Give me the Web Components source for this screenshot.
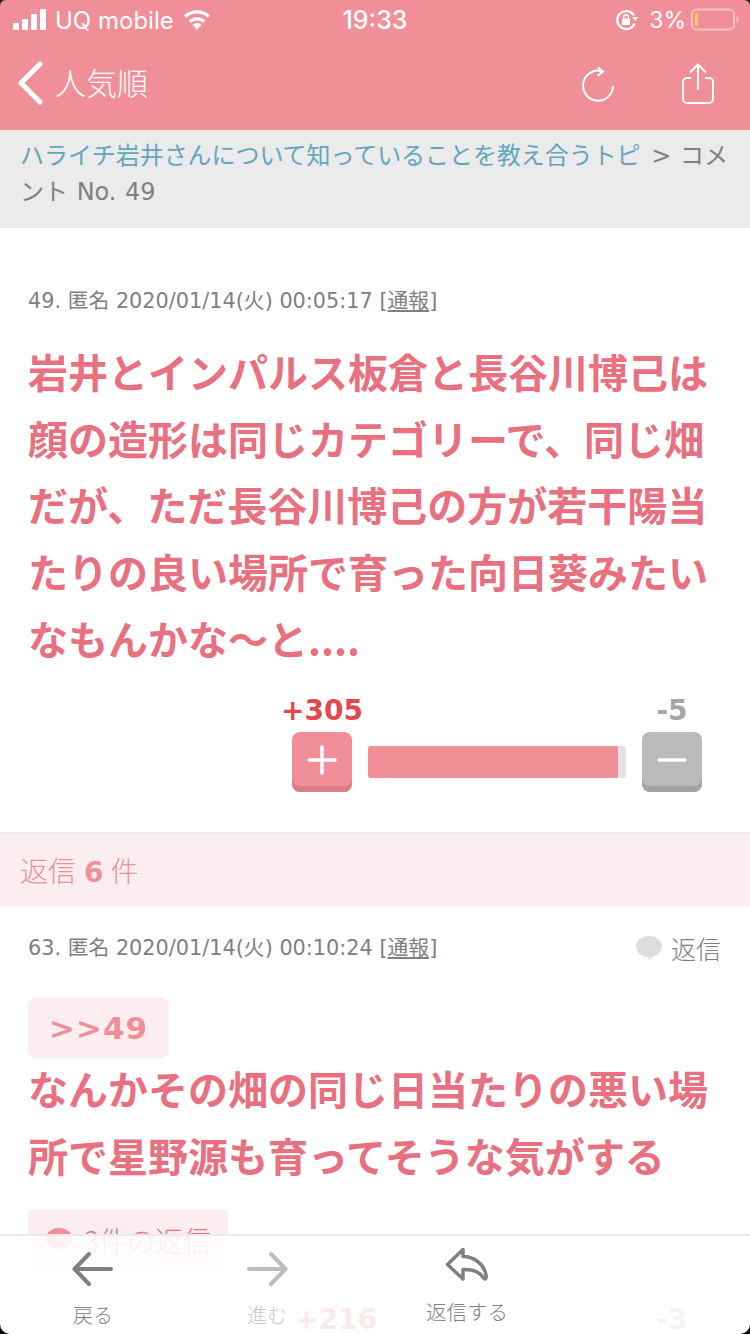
<!DOCTYPE html>
<html lang="ja"><head><meta charset="utf-8"><title>コメント</title>
<style>
html,body{margin:0;padding:0;background:#fff}
body{width:750px;height:1334px;overflow:hidden;position:relative;font-family:"DejaVu Sans","Noto Sans CJK JP",sans-serif}
</style></head><body>
<app-screen>
  <app-header></app-header>
  <bread-crumb></bread-crumb>
  <comment-main></comment-main>
  <reply-head></reply-head>
  <comment-reply></comment-reply>
</app-screen>
<bottom-bar></bottom-bar>
<script>
const FONT='"DejaVu Sans","Noto Sans CJK JP",sans-serif';
function def(name,css,html){
  customElements.define(name,class extends HTMLElement{
    constructor(){super();const s=this.attachShadow({mode:'open'});s.innerHTML='<style>'+css+'</style>'+html;}
  });
}
def('app-screen',':host{display:block;width:750px;height:1334px;overflow:hidden}','<slot></slot>');
def('app-header',`
:host{display:block;background:#f18f99;color:#fff;height:130px;position:relative}
.status{height:40px;position:relative;display:flex;align-items:center;padding:0 11px 0 13px;box-sizing:border-box;color:#fff;font-family:Inter,"Liberation Sans",sans-serif;font-size:24px}
.left{display:flex;align-items:center;gap:9px}
.time{position:absolute;left:0;right:0;text-align:center;font-size:25px;font-weight:500}
.right{margin-left:auto;display:flex;align-items:center;gap:10px}
.right span{font-size:23px}
.nav{height:90px;display:flex;align-items:center;padding:0 35px 0 17px}
.nav .back{display:flex;align-items:center;gap:12px;font-size:31px;font-family:"Noto Sans CJK JP",sans-serif;font-weight:300;margin-top:-4px}
.nav .back span{position:relative;top:-2px}
.nav .tools{margin-left:auto;display:flex;align-items:flex-start;gap:66px;margin-top:-3px}
.tools svg:first-child{margin-top:4px}
svg{display:block}
.cn{position:absolute;top:0;width:6px;height:6px}
`,`
<svg class="cn" style="left:0" viewBox="0 0 6 6"><path d="M0 0h6a6 6 0 0 0-6 6z" fill="#2a2224"/></svg>
<svg class="cn" style="right:0" viewBox="0 0 6 6"><path d="M6 0H0a6 6 0 0 1 6 6z" fill="#2a2224"/></svg>
<div class="status">
 <div class="left">
  <svg width="33" height="22" viewBox="0 0 33 22"><rect x="0" y="14" width="6" height="7" rx="1.2" fill="#fff"/><rect x="9" y="10" width="6" height="11" rx="1.2" fill="#fff"/><rect x="18" y="5" width="6" height="16" rx="1.2" fill="#fff"/><rect x="27" y="0" width="6" height="21" rx="1.2" fill="#fff"/></svg>
  <span>UQ mobile</span>
  <svg width="30" height="22" viewBox="0 0 30 22" style="margin-left:-1px"><path d="M15 21l-4.400-5.200a6.600 6.600 0 0 1 8.800 0z" fill="#fff"/><path d="M7.800 12.600a10.800 10.800 0 0 1 14.400 0M3.200 7.400a17.600 17.600 0 0 1 23.600 0" fill="none" stroke="#fff" stroke-width="3.400"/></svg>
 </div>
 <div class="time">19:33</div>
 <div class="right">
  <svg width="24" height="22" viewBox="0 0 24 22"><path d="M19.600 14.500A9 9 0 1 1 19 6.500" fill="none" stroke="#fff" stroke-width="2.200"/><path d="M17 8h6.500l-3.200 4z" fill="#fff"/><rect x="7" y="9.500" width="8" height="6.500" rx="1" fill="#fff"/><path d="M8.700 9.500V8a2.300 2.300 0 0 1 4.600 0v1.500" fill="none" stroke="#fff" stroke-width="1.400"/></svg>
  <span>3%</span>
  <svg width="48" height="24" viewBox="0 0 48 24" style="margin-left:-5px"><rect x="1" y="1.500" width="42" height="20" rx="5" fill="none" stroke="#fff" stroke-opacity=".45" stroke-width="2"/><rect x="4" y="5" width="3" height="13" rx="1" fill="#fbc85c"/><path d="M45.500 8v7c1.500-.5 2.200-2 2.200-3.500s-.7-3-2.200-3.500z" fill="#fff" fill-opacity=".45"/></svg>
 </div>
</div>
<div class="nav">
 <div class="back">
  <svg width="26" height="44" viewBox="0 0 26 44"><path d="M23 3L4 22l19 19" fill="none" stroke="#fff" stroke-width="5" stroke-linecap="round" stroke-linejoin="round"/></svg>
  <span>人気順</span>
 </div>
 <div class="tools">
  <svg width="34" height="36" viewBox="0 0 34 36"><path d="M21 4.200A15 15 0 1 0 32 19" fill="none" stroke="#fff" stroke-width="2"/><path d="M16.500 0l5.500 4.500-5.500 4.500" fill="none" stroke="#fff" stroke-width="2"/></svg>
  <svg width="34" height="42" viewBox="0 0 34 42"><path d="M10 15H6a4 4 0 0 0-4 4v17a4 4 0 0 0 4 4h22a4 4 0 0 0 4-4V19a4 4 0 0 0-4-4h-4" fill="none" stroke="#fff" stroke-width="2"/><path d="M17 27V2M9 9.500L17 1.500l8 8" fill="none" stroke="#fff" stroke-width="2"/></svg>
 </div>
</div>`);
def('bread-crumb',`
:host{display:block;background:#ebebeb;height:98px;box-sizing:border-box;padding:8px 14px 0 20px;font-size:24px;line-height:36px;color:#808080;font-family:${FONT};word-spacing:1px}
a{color:#63a6bc;text-decoration:none;letter-spacing:-.06px}
.g{margin-left:2px}
`,`<a>ハライチ岩井さんについて知っていることを教え合うトピ</a> <span class="g">&gt;</span> コメント No. 49`);
const metaCss=`.meta{font-size:20.800px;line-height:26px;color:#808080;white-space:nowrap;font-family:${FONT}}.meta u{text-decoration:underline}`;
const bodyCss=`.text{font-size:40px;font-weight:700;line-height:66.700px;color:#e9707f;font-family:"Noto Sans CJK JP",sans-serif}`;
def('comment-main',`
:host{display:block;height:606px;box-sizing:border-box;padding:60px 28px 0;background:#fff;border-bottom:2px solid #eceaea}
${metaCss}${bodyCss}
.meta{margin-bottom:24px}
.vote{display:block;margin-top:23px}
`,`<div class="meta">49. 匿名 2020/01/14(火) 00:05:17 [<u>通報</u>]</div>
<div class="text">岩井とインパルス板倉と長谷川博己は顔の造形は同じカテゴリーで、同じ畑だが、ただ長谷川博己の方が若干陽当たりの良い場所で育った向日葵みたいなもんかな〜と....</div>
<vote-bar class="vote" plus="+305" minus="-5"></vote-bar>`);
customElements.define('vote-bar',class extends HTMLElement{
  constructor(){super();const s=this.attachShadow({mode:'open'});
  const gap=this.getAttribute('gap')||279;
  s.innerHTML=`<style>
  :host{display:block;height:100px;font-family:"DejaVu Sans",sans-serif}
  .nums{display:flex;height:28px;padding-top:2px;justify-content:flex-end;font-size:28px;font-weight:700;line-height:28px}
  .p{color:#e4484f;width:82px;text-align:center;margin-right:${gap}px}
  .m{color:#a5a5a5;width:60px;text-align:center;margin-right:20px}
  .row{display:flex;justify-content:flex-end;align-items:flex-start;padding-right:20px;margin-top:7px}
  .btn{width:60px;height:60px;border-radius:8px;box-sizing:border-box;display:flex;align-items:center;justify-content:center;padding-bottom:4px}
  .b1{background:#f18f99;box-shadow:inset 0 -6px 0 #d97f8a}
  .b2{background:#bbb;box-shadow:inset 0 -6px 0 #a3a3a3}
  .bar{width:258px;height:32px;margin:14px 16px 0;background:#e3e3e3;border-radius:3px;overflow:hidden}
  .bar i{display:block;height:100%;width:250px;background:#f18f99}
  </style>
  <div class="nums"><span class="p">${this.getAttribute('plus')}</span><span class="m">${this.getAttribute('minus')}</span></div>
  <div class="row"><div class="btn b1"><svg width="30" height="30"><path d="M15 2v26M2 15h26" stroke="#fff" stroke-width="3.500" stroke-linecap="round"/></svg></div>
  <div class="bar"><i></i></div>
  <div class="btn b2"><svg width="30" height="30"><path d="M2 15h26" stroke="#fff" stroke-width="3.500" stroke-linecap="round"/></svg></div></div>`;}
});
def('reply-head',`:host{display:block;height:72px;background:#fbedf0;color:#f18f99;font-size:28px;line-height:72px;padding-left:20px;font-family:"Noto Sans CJK JP",sans-serif;font-weight:300}b{font-family:"DejaVu Sans";font-weight:700;margin:0 7px 0 8px}`,`返信<b>6</b>件`);
def('comment-reply',`
:host{display:block;padding:26px 28px 0;background:#fff}
${metaCss}${bodyCss}
.top{display:flex;justify-content:space-between;align-items:center;height:32px}
.rep{display:flex;align-items:center;gap:8px;font-size:25px;color:#808080;font-family:"Noto Sans CJK JP",sans-serif;font-weight:300;margin-right:1px}
.anc{display:inline-block;margin-top:34px;width:141px;height:60px;border-radius:8px;background:#fcedf0;color:#f18f99;font:700 31px/60px "DejaVu Sans",sans-serif;text-align:center;letter-spacing:1px}
.text{margin-top:-3px}
.cnt{margin-top:22px;width:200px;height:60px;border-radius:4px;background:#fcedf0;color:#e9707f;display:flex;align-items:center;gap:11px;padding-left:17px;box-sizing:border-box;font-size:28px;font-family:"Noto Sans CJK JP",sans-serif;font-weight:300}
`,`<div class="top"><div class="meta">63. 匿名 2020/01/14(火) 00:10:24 [<u>通報</u>]</div>
<div class="rep"><svg width="28" height="26" viewBox="0 0 28 26"><path d="M14 1C6.800 1 1 5.500 1 11.500S6.800 22 14 22l-1 3.500 5-4C23.500 20 27 16 27 11.500 27 5.500 21.200 1 14 1z" fill="#ddd"/></svg>返信</div></div>
<div class="anc">&gt;&gt;49</div>
<div class="text">なんかその畑の同じ日当たりの悪い場所で星野源も育ってそうな気がする</div>
<div class="cnt"><svg width="28" height="26" viewBox="0 0 28 26"><path d="M14 1C6.800 1 1 5.500 1 11.500S6.800 22 14 22l-1 3.500 5-4C23.500 20 27 16 27 11.500 27 5.500 21.200 1 14 1z" fill="#f18f99"/></svg>3件の返信</div>
<vote-bar plus="+216" minus="-3" gap="265" style="margin-top:34px"></vote-bar>`);
def('bottom-bar',`
:host{position:absolute;left:0;right:0;bottom:0;height:100px;display:block;background:rgba(255,255,255,.88);border-top:2px solid #eaeaea;box-sizing:border-box;font-family:"Noto Sans CJK JP",sans-serif;font-weight:300}
.row{display:flex;height:100%}
.it{display:flex;flex-direction:column;align-items:center;font-size:20px;color:#808080;width:174px;padding-top:15px;box-sizing:border-box;line-height:28px}
.it svg{display:block;margin-bottom:14px}
.off{color:#c8c8c8}
.c{position:absolute;width:10px;height:10px;bottom:0}
`,`<div class="row">
<div class="it" style="margin-left:6px"><svg width="42" height="36" viewBox="0 0 42 36"><path d="M39 18H3M17 3L2.500 18 17 33" fill="none" stroke="#808080" stroke-width="4" stroke-linecap="round" stroke-linejoin="round"/></svg>戻る</div>
<div class="it off"><svg width="42" height="36" viewBox="0 0 42 36"><path d="M3 18h36M25 3l14.500 15L25 33" fill="none" stroke="#bdbdbd" stroke-width="4" stroke-linecap="round" stroke-linejoin="round"/></svg>進む</div>
<div class="it" style="padding-top:11px;margin-left:26px;font-size:20.500px"><svg width="44" height="38" viewBox="0 0 44 38" style="margin-bottom:12px"><path d="M18 2.500L2.500 17.500 18 32V22.500C27 22 35 25 39 31.500 41 33 41.500 30 41 28 39 17 29 9.500 18 9.500z" fill="none" stroke="#808080" stroke-width="3.500" stroke-linejoin="round"/></svg>返信する</div>
</div>
<svg class="c" style="left:0" viewBox="0 0 10 10"><path d="M0 0a10 10 0 0 0 10 10H0z" fill="#000"/></svg>
<svg class="c" style="right:0" viewBox="0 0 10 10"><path d="M10 0A10 10 0 0 1 0 10h10z" fill="#000"/></svg>`);
</script>
</body></html>
